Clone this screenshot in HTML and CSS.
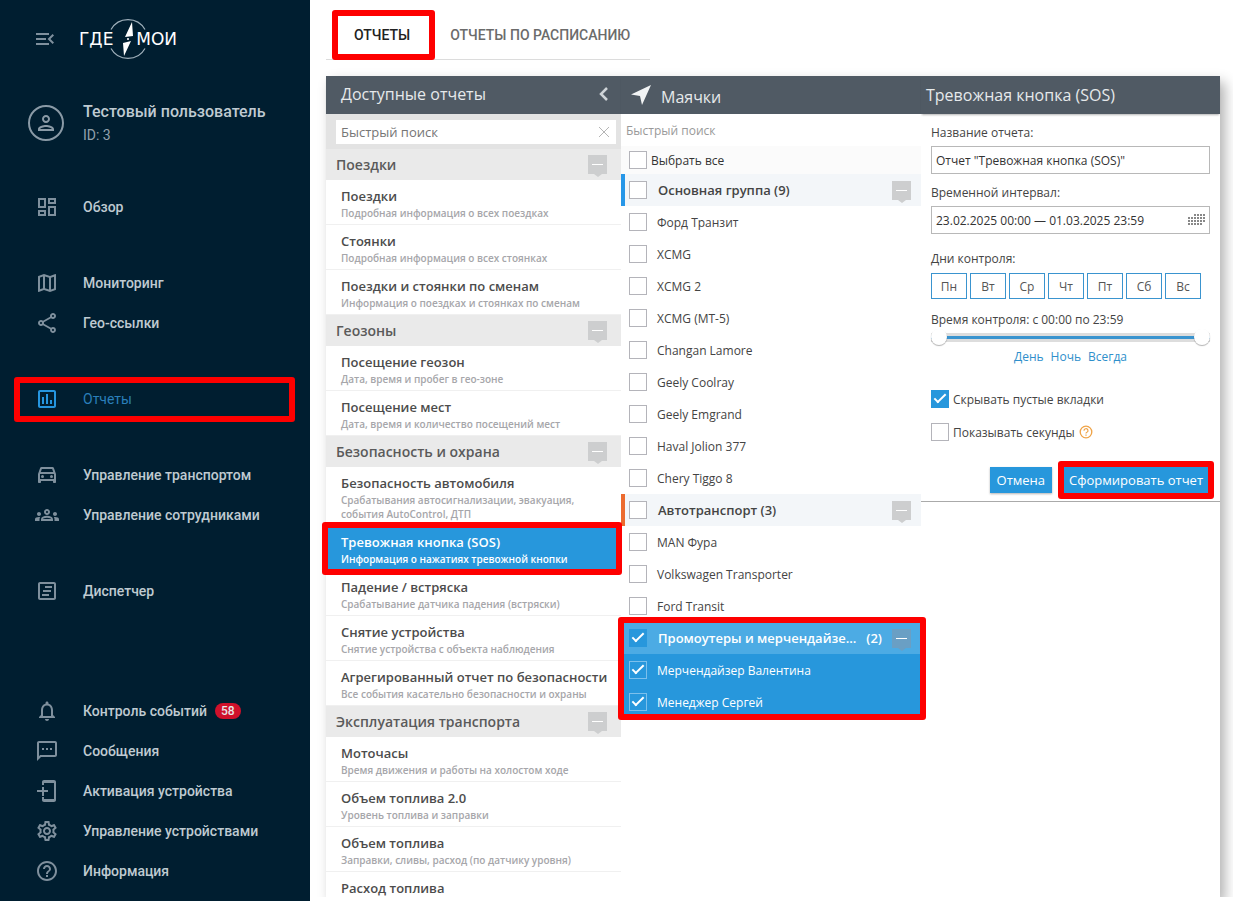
FILE: index.html
```html
<!DOCTYPE html>
<html lang="ru">
<head>
  <meta charset="UTF-8" />
  <meta name="viewport" content="width=device-width, initial-scale=1.0" />
  <title>Отчеты</title>
  <link rel="stylesheet" href="styles.css">
</head>
<body>
  <svg class="sprite" aria-hidden="true">
    <symbol id="toggle" viewBox="0 0 19 22">
      <path d="M0 0h19v19h-5l-4 3-4-3H0z" fill="currentColor"/>
      <path d="M4 9h11v1H4z" fill="#fff"/>
    </symbol>
  </svg>

  <aside class="sidebar">
    <div class="sidebar-head">
      <button class="icon-btn" aria-label="Свернуть меню">
        <svg class="icon" viewBox="0 0 24 24"><path d="M3 18h13v-2H3v2zM3 13h10v-2H3v2zm0-7v2h13V6H3zm18 9.59L17.42 12 21 8.41 19.59 7l-5 5 5 5L21 15.59z"/></svg>
      </button>
      <a class="logo" href="#">
        <svg class="compass" viewBox="0 0 42 42">
          <path d="M4 11.500A19.500 19.500 0 0 1 38 11.500M4 30.500A19.500 19.500 0 0 0 38 30.500" fill="none" stroke="#9fb0bb" stroke-width="1.200"/>
          <path d="M25 4l1 14-8 1zM17 38l-1-13 8-2z" fill="#fff"/>
          <circle cx="21" cy="21" r="1" fill="#fff"/>
        </svg>
        <span>ГДЕ</span>
        <span>МОИ</span>
      </a>
    </div>

    <div class="user">
      <span class="avatar">
        <svg class="icon" viewBox="0 0 24 24"><path d="M12 6c1.100 0 2 .9 2 2s-.9 2-2 2-2-.9-2-2 .9-2 2-2m0 10c2.700 0 5.800 1.290 6 2H6c.23-.72 3.310-2 6-2m0-12C9.790 4 8 5.790 8 8s1.790 4 4 4 4-1.790 4-4-1.790-4-4-4zm0 10c-2.670 0-8 1.340-8 4v2h16v-2c0-2.660-5.330-4-8-4z"/></svg>
      </span>
      <div>
        <div class="user-name">Тестовый пользователь</div>
        <div class="user-id">ID: 3</div>
      </div>
    </div>

    <nav class="menu">
      <div class="menu-group">
        <a href="#" class="menu-item">
          <svg class="icon" viewBox="0 0 24 24"><path d="M19 5v2h-4V5h4M9 5v6H5V5h4m10 8v6h-4v-6h4M9 17v2H5v-2h4M21 3h-8v6h8V3zM11 3H3v10h8V3zm10 8h-8v10h8V11zm-10 4H3v6h8v-6z"/></svg>
          <span>Обзор</span>
        </a>
      </div>
      <div class="menu-group">
        <a href="#" class="menu-item">
          <svg class="icon" viewBox="0 0 24 24"><path d="M20.500 3l-.16.030L15 5.100 9 3 3.360 4.900c-.21.070-.36.250-.36.480V20.500c0 .28.220.5.5.5l.16-.03L9 18.900l6 2.100 5.640-1.900c.21-.07.36-.25.36-.48V3.500c0-.28-.22-.5-.5-.5zM10 5.470l4 1.400v11.660l-4-1.400V5.470zm-5 .99l3-1.010v11.700l-3 1.160V6.460zm14 11.080l-3 1.010V6.860l3-1.160v11.840z"/></svg>
          <span>Мониторинг</span>
        </a>
        <a href="#" class="menu-item">
          <svg class="icon" viewBox="0 0 24 24"><path d="M18 16.080c-.76 0-1.440.3-1.960.77L8.910 12.700c.05-.23.090-.46.090-.7s-.04-.47-.09-.7l7.050-4.110c.54.5 1.250.81 2.040.81 1.660 0 3-1.340 3-3s-1.340-3-3-3-3 1.340-3 3c0 .24.040.47.090.7L8.040 9.810C7.500 9.310 6.790 9 6 9c-1.660 0-3 1.340-3 3s1.340 3 3 3c.79 0 1.500-.31 2.040-.81l7.120 4.160c-.05.21-.08.43-.08.650 0 1.610 1.310 2.920 2.920 2.920s2.920-1.310 2.920-2.920-1.310-2.920-2.920-2.920zM18 4c.55 0 1 .45 1 1s-.45 1-1 1-1-.45-1-1 .45-1 1-1zM6 13c-.55 0-1-.45-1-1s.45-1 1-1 1 .45 1 1-.45 1-1 1zm12 7.020c-.55 0-1-.45-1-1s.45-1 1-1 1 .45 1 1-.45 1-1 1z"/></svg>
          <span>Гео-ссылки</span>
        </a>
      </div>
      <div class="menu-group">
        <a href="#" class="menu-item active">
          <svg class="icon" viewBox="0 0 24 24"><path d="M9 17H7v-7h2v7zm4 0h-2V7h2v10zm4 0h-2v-4h2v4zm2 2H5V5h14v14zm0-16H5c-1.100 0-2 .9-2 2v14c0 1.100.9 2 2 2h14c1.100 0 2-.9 2-2V5c0-1.100-.9-2-2-2z"/></svg>
          <span>Отчеты</span>
        </a>
      </div>
      <div class="menu-group">
        <a href="#" class="menu-item">
          <svg class="icon" viewBox="0 0 24 24"><path d="M18.920 5.010C18.720 4.420 18.160 4 17.500 4h-11c-.66 0-1.210.42-1.420 1.010L3 11v8c0 .55.450 1 1 1h1c.55 0 1-.45 1-1v-1h12v1c0 .55.450 1 1 1h1c.55 0 1-.45 1-1v-8l-2.080-5.990zM6.850 6h10.290l1.080 3.110H5.770L6.850 6zM19 16H5v-5h14v5z"/><circle cx="7.500" cy="13.500" r="1.500"/><circle cx="16.500" cy="13.500" r="1.500"/></svg>
          <span>Управление транспортом</span>
        </a>
        <a href="#" class="menu-item">
          <svg class="icon" viewBox="0 0 24 24"><path d="M4 13c1.100 0 2-.9 2-2s-.9-2-2-2-2 .9-2 2 .9 2 2 2zm1.130 1.100C4.760 14.040 4.390 14 4 14c-.99 0-1.930.21-2.780.58C.48 14.900 0 15.620 0 16.430V18h4.500v-1.610c0-.83.230-1.610.63-2.290zM20 13c1.100 0 2-.9 2-2s-.9-2-2-2-2 .9-2 2 .9 2 2 2zm4 3.430c0-.81-.48-1.530-1.220-1.850C21.930 14.210 20.990 14 20 14c-.39 0-.76.040-1.130.1.400.68.630 1.460.63 2.290V18H24v-1.570zM16.240 13.650c-1.170-.52-2.610-.9-4.240-.9s-3.070.39-4.240.9C6.680 14.130 6 15.210 6 16.390V18h12v-1.610c0-1.180-.68-2.260-1.760-2.740zM8.070 16c.09-.23.130-.39.910-.69.970-.38 1.990-.56 3.020-.56s2.050.18 3.020.56c.77.3.810.46.910.69H8.070zM12 8c.55 0 1 .45 1 1s-.45 1-1 1-1-.45-1-1 .45-1 1-1m0-2c-1.660 0-3 1.340-3 3s1.340 3 3 3 3-1.340 3-3-1.340-3-3-3z"/></svg>
          <span>Управление сотрудниками</span>
        </a>
      </div>
      <div class="menu-group">
        <a href="#" class="menu-item">
          <svg class="icon" viewBox="0 0 24 24"><path d="M19 5v14H5V5h14m0-2H5c-1.100 0-2 .9-2 2v14c0 1.100.9 2 2 2h14c1.100 0 2-.9 2-2V5c0-1.100-.9-2-2-2z"/><path d="M10 7h7v2h-7zM8 11h8v2H8zM7 15h7v2H7z"/></svg>
          <span>Диспетчер</span>
        </a>
      </div>
      <div class="menu-group menu-bottom">
        <a href="#" class="menu-item">
          <svg class="icon" viewBox="0 0 24 24"><path d="M12 22c1.100 0 2-.9 2-2h-4c0 1.100.9 2 2 2zm6-6v-5c0-3.070-1.630-5.640-4.500-6.320V4c0-.83-.67-1.500-1.500-1.500s-1.500.67-1.500 1.500v.68C7.640 5.360 6 7.920 6 11v5l-2 2v1h16v-1l-2-2zm-2 1H8v-6c0-2.480 1.510-4.500 4-4.500s4 2.020 4 4.500v6z"/></svg>
          <span>Контроль событий</span>
          <span class="badge">58</span>
        </a>
        <a href="#" class="menu-item">
          <svg class="icon" viewBox="0 0 24 24"><path d="M20 2H4c-1.100 0-2 .9-2 2v18l4-4h14c1.100 0 2-.9 2-2V4c0-1.100-.9-2-2-2zm0 14H5.170L4 17.170V4h16v12zM7 9h2v2H7zm4 0h2v2h-2zm4 0h2v2h-2z"/></svg>
          <span>Сообщения</span>
        </a>
        <a href="#" class="menu-item">
          <svg class="icon" viewBox="0 0 24 24"><path d="M19 1H9C7.900 1 7 1.900 7 3v3h2V4h10v16H9v-2H7v3c0 1.100.9 2 2 2h10c1.100 0 2-.9 2-2V3c0-1.100-.9-2-2-2z"/><path d="M7 8h2v3h4v2H9v4H7v-4H2v-2h5z"/></svg>
          <span>Активация устройства</span>
        </a>
        <a href="#" class="menu-item">
          <svg class="icon" viewBox="0 0 24 24"><path d="M19.430 12.980c.04-.32.070-.64.070-.98 0-.34-.03-.66-.07-.98l2.110-1.650c.19-.15.240-.42.120-.64l-2-3.460c-.09-.16-.26-.25-.44-.25-.06 0-.12.010-.17.030l-2.490 1c-.52-.4-1.080-.73-1.690-.98l-.38-2.650C14.460 2.180 14.250 2 14 2h-4c-.25 0-.46.180-.49.420l-.38 2.650c-.61.250-1.170.59-1.690.98l-2.490-1c-.06-.02-.12-.03-.18-.03-.17 0-.34.090-.43.250l-2 3.460c-.13.220-.07.490.12.640l2.110 1.650c-.04.320-.07.650-.07.980 0 .33.030.66.070.98l-2.110 1.650c-.19.150-.24.420-.12.640l2 3.460c.09.160.26.250.44.250.06 0 .12-.01.170-.03l2.490-1c.52.4 1.080.73 1.690.98l.38 2.650c.03.240.24.420.49.420h4c.25 0 .46-.18.490-.42l.38-2.650c.61-.25 1.170-.59 1.690-.98l2.490 1c.06.020.12.030.18.030.17 0 .34-.09.430-.25l2-3.460c.12-.22.070-.49-.12-.64l-2.110-1.650zm-1.980-1.710c.04.310.05.520.05.730 0 .21-.02.430-.05.730l-.14 1.130.89.700 1.080.84-.7 1.210-1.270-.51-1.040-.42-.9.680c-.43.320-.84.560-1.250.73l-1.060.43-.16 1.130-.2 1.350h-1.400l-.19-1.350-.16-1.130-1.060-.43c-.43-.18-.83-.41-1.230-.71l-.91-.7-1.060.43-1.270.51-.7-1.210 1.080-.84.890-.7-.14-1.130c-.03-.31-.05-.54-.05-.74s.02-.43.050-.73l.14-1.130-.89-.7-1.080-.84.7-1.210 1.270.51 1.040.42.9-.68c.43-.32.840-.56 1.250-.73l1.060-.43.160-1.130.2-1.350h1.390l.19 1.350.16 1.130 1.060.43c.43.180.83.410 1.230.71l.91.7 1.060-.43 1.270-.51.7 1.210-1.070.85-.89.7.14 1.130zM12 8c-2.210 0-4 1.790-4 4s1.790 4 4 4 4-1.790 4-4-1.790-4-4-4zm0 6c-1.100 0-2-.9-2-2s.9-2 2-2 2 .9 2 2-.9 2-2 2z"/></svg>
          <span>Управление устройствами</span>
        </a>
        <a href="#" class="menu-item">
          <svg class="icon" viewBox="0 0 24 24"><path d="M11 18h2v-2h-2v2zm1-16C6.480 2 2 6.480 2 12s4.480 10 10 10 10-4.480 10-10S17.520 2 12 2zm0 18c-4.410 0-8-3.590-8-8s3.590-8 8-8 8 3.590 8 8-3.590 8-8 8zm0-14c-2.210 0-4 1.790-4 4h2c0-1.100.9-2 2-2s2 .9 2 2c0 2-3 1.750-3 5h2c0-2.250 3-2.500 3-5 0-2.210-1.790-4-4-4z"/></svg>
          <span>Информация</span>
        </a>
      </div>
    </nav>
  </aside>

  <main class="content">
    <div class="tabs">
      <a href="#" class="tab selected">Отчеты</a>
      <a href="#" class="tab">Отчеты по расписанию</a>
    </div>

    <div class="panel">
      <section class="reports">
        <div class="panel-head">
          <h2>Доступные отчеты</h2>
          <button class="collapse" aria-label="Свернуть">
            <svg width="10" height="14" viewBox="0 0 10 14"><path d="M8 1L2 7l6 6" fill="none" stroke="#cfd4d8" stroke-width="2.500"/></svg>
          </button>
        </div>
        <div class="report-search">
          <input type="text" placeholder="Быстрый поиск" aria-label="Быстрый поиск отчета">
          <button class="clear" aria-label="Очистить">
            <svg width="12" height="12" viewBox="0 0 12 12"><path d="M1 1l10 10M11 1L1 11" stroke="#b5b5b5" fill="none"/></svg>
          </button>
        </div>

        <div class="report-group">Поездки <button class="toggle" aria-label="Свернуть группу"><svg><use href="#toggle"/></svg></button></div>
        <div class="report"><h3>Поездки</h3><p>Подробная информация о всех поездках</p></div>
        <div class="report"><h3>Стоянки</h3><p>Подробная информация о всех стоянках</p></div>
        <div class="report"><h3>Поездки и стоянки по сменам</h3><p>Информация о поездках и стоянках по сменам</p></div>

        <div class="report-group">Геозоны <button class="toggle" aria-label="Свернуть группу"><svg><use href="#toggle"/></svg></button></div>
        <div class="report"><h3>Посещение геозон</h3><p>Дата, время и пробег в гео-зоне</p></div>
        <div class="report"><h3>Посещение мест</h3><p>Дата, время и количество посещений мест</p></div>

        <div class="report-group">Безопасность и охрана <button class="toggle" aria-label="Свернуть группу"><svg><use href="#toggle"/></svg></button></div>
        <div class="report"><h3>Безопасность автомобиля</h3><p>Срабатывания автосигнализации, эвакуация, события AutoControl, ДТП</p></div>
        <div class="report current"><h3>Тревожная кнопка (SOS)</h3><p>Информация о нажатиях тревожной кнопки</p></div>
        <div class="report"><h3>Падение / встряска</h3><p>Срабатывание датчика падения (встряски)</p></div>
        <div class="report"><h3>Снятие устройства</h3><p>Снятие устройства с объекта наблюдения</p></div>
        <div class="report"><h3>Агрегированный отчет по безопасности</h3><p>Все события касательно безопасности и охраны</p></div>

        <div class="report-group">Эксплуатация транспорта <button class="toggle" aria-label="Свернуть группу"><svg><use href="#toggle"/></svg></button></div>
        <div class="report"><h3>Моточасы</h3><p>Время движения и работы на холостом ходе</p></div>
        <div class="report"><h3>Объем топлива 2.0</h3><p>Уровень топлива и заправки</p></div>
        <div class="report"><h3>Объем топлива</h3><p>Заправки, сливы, расход (по датчику уровня)</p></div>
        <div class="report"><h3>Расход топлива</h3></div>
      </section>

      <section class="trackers">
        <div class="panel-head">
          <svg class="arrow" width="20" height="20" viewBox="0 0 20 20"><path d="M20 0L0 9.500l9 1.500 2 9z" fill="#f2f4f5"/></svg>
          <h2>Маячки</h2>
        </div>
        <input class="tracker-search" type="text" placeholder="Быстрый поиск" aria-label="Быстрый поиск маячка">
        <label class="select-all"><input type="checkbox"> Выбрать все</label>

        <div class="tracker-group blue">
          <label><input type="checkbox"> <b>Основная группа (9)</b></label>
          <button class="toggle" aria-label="Свернуть группу"><svg><use href="#toggle"/></svg></button>
        </div>
        <label class="tracker"><input type="checkbox"> Форд Транзит</label>
        <label class="tracker"><input type="checkbox"> XCMG</label>
        <label class="tracker"><input type="checkbox"> XCMG 2</label>
        <label class="tracker"><input type="checkbox"> XCMG (MT-5)</label>
        <label class="tracker"><input type="checkbox"> Changan Lamore</label>
        <label class="tracker"><input type="checkbox"> Geely Coolray</label>
        <label class="tracker"><input type="checkbox"> Geely Emgrand</label>
        <label class="tracker"><input type="checkbox"> Haval Jolion 377</label>
        <label class="tracker"><input type="checkbox"> Chery Tiggo 8</label>

        <div class="tracker-group orange">
          <label><input type="checkbox"> <b>Автотранспорт (3)</b></label>
          <button class="toggle" aria-label="Свернуть группу"><svg><use href="#toggle"/></svg></button>
        </div>
        <label class="tracker"><input type="checkbox"> MAN Фура</label>
        <label class="tracker"><input type="checkbox"> Volkswagen Transporter</label>
        <label class="tracker"><input type="checkbox"> Ford Transit</label>

        <div class="chosen">
          <div class="tracker-group">
            <label><input type="checkbox" checked> <b>Промоутеры и мерчендайзе...</b> <b class="count">(2)</b></label>
            <button class="toggle" aria-label="Свернуть группу"><svg><use href="#toggle"/></svg></button>
          </div>
          <label class="tracker"><input type="checkbox" checked> Мерчендайзер Валентина</label>
          <label class="tracker"><input type="checkbox" checked> Менеджер Сергей</label>
        </div>
      </section>

      <section class="settings">
        <div class="panel-head">
          <h2>Тревожная кнопка (SOS)</h2>
        </div>
        <form class="form">
          <label class="caption" for="name">Название отчета:</label>
          <input class="field" type="text" id="name" value='Отчет "Тревожная кнопка (SOS)"'>

          <label class="caption" for="period">Временной интервал:</label>
          <div class="period">
            <input class="field" type="text" id="period" value="23.02.2025 00:00 — 01.03.2025 23:59">
            <svg class="calendar" width="18" height="12" viewBox="0 0 18 12"><path d="M6 1h12M0 4h18M0 7h18M0 10h15" stroke="#888" stroke-width="2" stroke-dasharray="2 1" fill="none"/></svg>
          </div>

          <div class="caption wide">Дни контроля:</div>
          <div class="days">
            <button type="button">Пн</button>
            <button type="button">Вт</button>
            <button type="button">Ср</button>
            <button type="button">Чт</button>
            <button type="button">Пт</button>
            <button type="button">Сб</button>
            <button type="button">Вс</button>
          </div>

          <div class="caption time">Время контроля: с 00:00 по 23:59</div>
          <div class="slider">
            <input type="range" min="0" max="1439" value="0" aria-label="Начало">
            <input type="range" min="0" max="1439" value="1439" aria-label="Конец">
          </div>
          <div class="presets">
            <a href="#">День</a>
            <a href="#">Ночь</a>
            <a href="#">Всегда</a>
          </div>

          <label class="option"><input type="checkbox" checked> Скрывать пустые вкладки</label>
          <label class="option"><input type="checkbox"> Показывать секунды
            <svg width="14" height="14" viewBox="0 0 14 14"><circle cx="7" cy="7" r="5.800" fill="none" stroke="#efa347" stroke-width="1.300"/><path d="M5 5.700a2 1.900 0 1 1 2.900 1.600q-.9.400-.9 1.200M7 9.400v1.300" fill="none" stroke="#efa347" stroke-width="1.200"/></svg>
          </label>

          <div class="actions">
            <button type="button">Отмена</button>
            <button type="button" class="submit">Сформировать отчет</button>
          </div>
        </form>
      </section>
    </div>
  </main>
</body>
</html>
```

FILE: styles.css
```css
* {
  box-sizing: border-box;
}
body {
  margin: 0;
  display: flex;
  height: 100vh;
  overflow: hidden;
  font-family: "Open Sans", "Noto Sans", sans-serif;
  font-size: 12px;
  color: #444;
  background: #fff;
}
button {
  font-family: inherit;
  padding: 0;
  border: none;
  background: none;
  cursor: pointer;
}
a {
  text-decoration: none;
}
h2, h3, p {
  margin: 0;
  font-weight: normal;
}
.sprite {
  position: absolute;
  width: 0;
  height: 0;
}

/* sidebar */
.sidebar {
  width: 310px;
  flex: none;
  display: flex;
  flex-direction: column;
  padding-bottom: 10px;
  background: #001e30;
  font-family: Roboto, sans-serif;
}
.icon {
  display: block;
  width: 24px;
  height: 24px;
  flex: none;
  fill: #7f909d;
}
.sidebar-head {
  display: flex;
  align-items: center;
  gap: 22px;
  height: 78px;
  padding-left: 33px;
}
.logo {
  position: relative;
  display: flex;
  justify-content: space-between;
  width: 98px;
  color: #fff;
  font-family: "DejaVu Sans", sans-serif;
  font-size: 17px;
  line-height: 24px;
}
.compass {
  position: absolute;
  left: 50%;
  top: 50%;
  width: 42px;
  height: 42px;
  transform: translate(-50%, -50%);
}
.user {
  display: flex;
  align-items: center;
  gap: 19px;
  padding: 22px 0 0 28px;
}
.avatar {
  display: flex;
  align-items: center;
  justify-content: center;
  width: 36px;
  height: 36px;
  border: 2px solid #8a9aa6;
  border-radius: 50%;
}
.avatar .icon {
  fill: #8a9aa6;
}
.user-name {
  font-size: 16px;
  font-weight: 500;
  line-height: 24px;
  color: #bfcad1;
}
.user-id {
  font-size: 14px;
  line-height: 22px;
  color: #93a2ad;
}
.menu {
  flex: 1;
  display: flex;
  flex-direction: column;
  gap: 36px;
  padding-top: 41px;
}
.menu-item {
  position: relative;
  display: flex;
  align-items: center;
  height: 40px;
  padding-left: 35px;
  font-size: 14px;
  font-weight: 500;
  color: #bfcad1;
}
.menu-item .icon {
  margin-right: 24px;
}
.menu-item.active {
  font-weight: 400;
  color: #2a7fba;
}
.menu-item.active .icon {
  fill: #2596e0;
}
.menu-bottom {
  margin-top: auto;
}
.badge {
  margin-left: 8px;
  padding: 0 6px;
  border-radius: 8px;
  background: #d0112b;
  color: #e8e8e8;
  font-size: 12px;
  line-height: 16px;
}

/* red frames */
.menu-item.active::after,
.tab.selected::after,
.report.current::after,
.chosen::after,
.submit::after {
  content: "";
  position: absolute;
  z-index: 2;
  border: 6px solid #fe0000;
  border-radius: 3px;
  pointer-events: none;
}
.menu-item.active::after {
  inset: -2px 15px -3px 14px;
}
.tab.selected::after {
  inset: 0;
}
.report.current::after {
  inset: -4px -1px -5px -4px;
}
.chosen::after {
  inset: -5px -5px -2px -3px;
}
.submit::after {
  inset: -6px;
}

/* content */
.content {
  flex: 1;
  min-width: 0;
  height: calc(100vh - 4px);
  overflow: hidden;
  padding: 10px 13px 0 16px;
}
.tabs {
  display: flex;
  width: 324px;
  border-bottom: 1px solid #dcdcdc;
  font-family: Roboto, sans-serif;
  font-size: 14px;
  font-weight: 500;
  text-transform: uppercase;
}
.tab {
  position: relative;
  padding: 1px 15px 0;
  line-height: 48px;
  color: #6b6b6b;
  white-space: nowrap;
}
.tab.selected {
  margin: 0 0 -1px 6px;
  padding: 1px 25px 1px 22px;
  color: #222;
}
.panel {
  display: grid;
  grid-template-columns: 295px 300px 1fr;
  margin-top: 16px;
  box-shadow: 5px 6px 12px rgba(0, 0, 0, 0.3);
}
.panel-head {
  display: flex;
  align-items: center;
  height: 38px;
  padding: 0 5px;
  background: #505a64;
  box-shadow: 0 2px 2px -1px rgba(0, 0, 0, 0.3);
}
.panel-head h2 {
  font-size: 16px;
  line-height: 24px;
  color: #e6e9eb;
}
.toggle {
  flex: none;
  width: 19px;
  height: 22px;
  margin-top: 3px;
  color: #cdcecf;
}
.toggle svg {
  display: block;
  width: 19px;
  height: 22px;
}

/* report list */
.reports .panel-head {
  justify-content: space-between;
  padding: 0 12px 2px 15px;
}
.collapse svg {
  display: block;
}
.report-search {
  position: relative;
  padding: 6px 5px 5px 10px;
  background: #e3e3e3;
}
.report-search input {
  display: block;
  width: 100%;
  height: 24px;
  padding: 0 5px;
  border: none;
  font-family: inherit;
  font-size: 13px;
}
.report-search input::placeholder {
  color: #757575;
}
.clear {
  position: absolute;
  right: 11px;
  top: 12px;
}
.clear svg {
  display: block;
}
.report-group {
  display: flex;
  align-items: center;
  justify-content: space-between;
  height: 31px;
  padding: 0 14px 0 10px;
  background: #eaeaea;
  font-size: 14px;
  font-weight: 600;
  color: #5a5a5a;
}
.report {
  position: relative;
  padding: 6px 5px 4px 15px;
  border-bottom: 1px solid #f0f0f0;
}
.report h3 {
  font-size: 13px;
  font-weight: 600;
  line-height: 20px;
  color: #4c4c4c;
  white-space: nowrap;
}
.report p {
  font-size: 10px;
  font-weight: 600;
  line-height: 14px;
  color: #a6a6aa;
}
.report.current {
  border-color: #2797dc;
  background: #2797dc;
}
.report.current h3,
.report.current p {
  color: #fff;
}
.report:last-child {
  padding-bottom: 0;
  border: none;
}

/* checkboxes */
input[type="checkbox"] {
  appearance: none;
  position: relative;
  flex: none;
  width: 18px;
  height: 18px;
  margin: 0;
  border: 1px solid #b4b4ba;
  background: #fff;
}
input[type="checkbox"]:checked {
  border-color: #2797dc;
  background: #2797dc;
}
input[type="checkbox"]:checked::after {
  content: "";
  box-sizing: border-box;
  position: absolute;
  left: 2px;
  top: 3px;
  width: 12px;
  height: 6px;
  border: solid #fff;
  border-width: 0 0 2px 2px;
  transform: rotate(-45deg);
}

/* trackers */
.trackers .panel-head {
  gap: 10px;
  padding: 4px 10px 0;
}
.arrow {
  margin-top: -4px;
}
.tracker-search {
  display: block;
  width: 100%;
  height: 32px;
  padding: 0 5px;
  border: none;
  font-family: inherit;
  font-size: 12px;
}
.tracker-search::placeholder {
  color: #999;
}
.select-all {
  display: flex;
  align-items: center;
  gap: 4px;
  height: 28px;
  padding-left: 8px;
  background: #fbfbfb;
  color: #333;
}
.tracker-group {
  display: flex;
  align-items: center;
  height: 32px;
  padding-right: 10px;
  border-left: 4px solid transparent;
  background: #f3f6f9;
}
.tracker-group.blue {
  border-color: #2797e8;
}
.tracker-group.orange {
  border-color: #ec6b2f;
}
.tracker-group label {
  flex: 1;
  display: flex;
  align-items: center;
  padding: 0 10px 0 4px;
}
.tracker-group b {
  margin-left: 11px;
  font-size: 13px;
  font-weight: 600;
  white-space: nowrap;
}
.tracker {
  display: flex;
  align-items: center;
  gap: 10px;
  height: 32px;
  padding-left: 8px;
}
.chosen {
  position: relative;
  background: #2797dc;
  color: #fff;
}
.chosen .tracker-group {
  background: #4cabe4;
}
.chosen .tracker-group .count {
  margin-left: auto;
}
.chosen .toggle {
  color: #6a9fc4;
}
.chosen .tracker input {
  border-color: #7cc0ec;
}

/* report settings */
.form {
  display: flex;
  flex-direction: column;
  padding: 10px 10px 8px;
  border-bottom: 1px solid #aaa;
}
.caption {
  margin-bottom: 4px;
  line-height: 18px;
}
.field {
  width: 100%;
  height: 28px;
  margin-bottom: 10px;
  padding: 0 4px;
  border: 1px solid #b8b8b8;
  font-family: inherit;
  font-size: 12px;
  color: #333;
}
.period {
  position: relative;
}
.calendar {
  position: absolute;
  right: 4px;
  top: 8px;
}
.wide {
  margin: 6px 0 5px;
}
.days {
  display: flex;
  gap: 3px;
}
.days button {
  width: 36px;
  height: 26px;
  border: 1px solid #3a94cf;
  font-size: 12px;
  color: #555;
}
.time {
  margin: 12px 0 0;
}
.slider {
  position: relative;
  height: 16px;
  background: linear-gradient(#ddd 3px, #3a94cf 3px, #3a94cf 6px, #ddd 6px) 0 4px / 100% 9px no-repeat;
}
.slider input {
  appearance: none;
  position: absolute;
  width: 100%;
  height: 16px;
  margin: 0;
  background: none;
  pointer-events: none;
}
.slider input::-webkit-slider-thumb {
  appearance: none;
  width: 16px;
  height: 16px;
  border-radius: 50%;
  background: #fff;
  box-shadow: 0 1px 1px rgba(0, 0, 0, 0.3);
  pointer-events: auto;
}
.presets {
  display: flex;
  justify-content: center;
  gap: 7px;
  margin: 3px 0 9px;
  line-height: 18px;
}
.presets a {
  color: #2f8fcb;
}
.option {
  display: flex;
  align-items: center;
  gap: 4px;
  height: 18px;
  margin-top: 15px;
}
.actions {
  display: flex;
  justify-content: flex-end;
  gap: 12px;
  margin-top: 26px;
  padding-right: 2px;
}
.actions button {
  position: relative;
  height: 26px;
  padding: 0 7px;
  background: #2797dc;
  box-shadow: 0 1px 2px rgba(0, 0, 0, 0.3);
  font-size: 13px;
  font-weight: 500;
  color: #fff;
}
.actions .submit {
  padding: 0 5px;
}
```
